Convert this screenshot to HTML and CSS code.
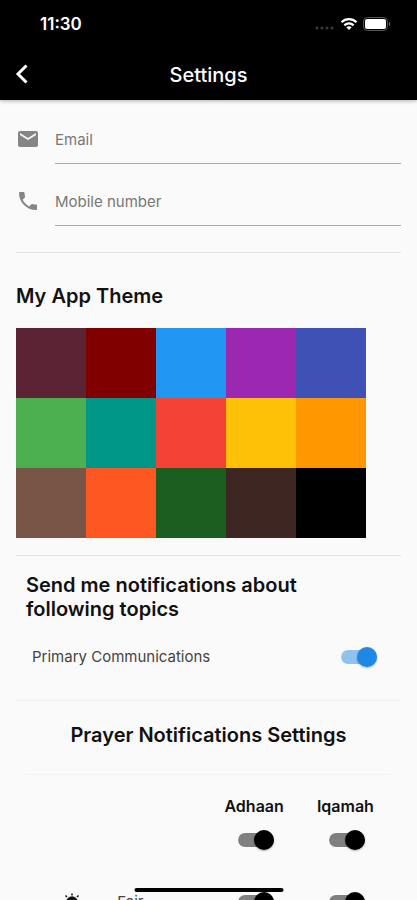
FILE: index.html
```html
<!DOCTYPE html>
<html lang="en">
<head>
    <meta charset="UTF-8">
    <meta name="viewport" content="width=device-width, initial-scale=1.0">
    <title>Settings</title>
    <link rel="stylesheet" href="styles.css">
</head>
<body>
    <header class="app-header">
        <div class="status-bar">
            <span class="time">11:30</span>
            <div class="status-icons">
                <svg width="20" height="14" viewBox="0 0 20 14" fill="#3a3a3a">
                    <circle cx="2" cy="11" r="1.5"/><circle cx="7" cy="11" r="1.5"/><circle cx="12" cy="11" r="1.5"/><circle cx="17" cy="11" r="1.5"/>
                </svg>
                <svg class="wifi" width="18" height="14" viewBox="0 0 18 14" fill="none" stroke="#fff" stroke-width="2.3">
                    <path d="M1.5 5.2C5.7 1.1 12.3 1.1 16.5 5.2"/>
                    <path d="M4.4 8.3C7 5.8 11 5.8 13.6 8.3"/>
                    <path d="M9 13 6.3 10.3C7.8 8.9 10.2 8.9 11.7 10.3Z" fill="#fff" stroke="none"/>
                </svg>
                <svg width="28" height="14" viewBox="0 0 28 14">
                    <rect x="0.5" y="0.5" width="24" height="13" rx="4" fill="none" stroke="#555"/>
                    <rect x="2" y="2" width="21" height="10" rx="2" fill="#fff"/>
                    <path d="M26 4.8C27.6 5.6 27.6 8.4 26 9.2Z" fill="#777"/>
                </svg>
            </div>
        </div>
        <div class="title-bar">
            <button class="back-btn" type="button" aria-label="Back">
                <svg width="14" height="22" viewBox="0 0 14 22" fill="none" stroke="#fff" stroke-width="3">
                    <path d="M11.5 1.5 3 10 11.5 18.5"/>
                </svg>
            </button>
            <h1>Settings</h1>
        </div>
    </header>

    <main class="content">
        <form class="contact">
            <div class="field">
                <label for="email" aria-label="Email">
                    <svg width="24" height="24" viewBox="0 0 24 24" fill="#858585"><path d="M20 4H4c-1.1 0-1.99.9-1.99 2L2 18c0 1.1.9 2 2 2h16c1.1 0 2-.9 2-2V6c0-1.1-.9-2-2-2zm0 4l-8 5-8-5V6l8 5 8-5v2z"/></svg>
                </label>
                <input type="email" id="email" placeholder="Email">
            </div>
            <div class="field">
                <label for="mobile" aria-label="Mobile number">
                    <svg width="24" height="24" viewBox="0 0 24 24" fill="#858585"><path d="M6.62 10.79c1.44 2.83 3.76 5.14 6.59 6.59l2.2-2.2c.27-.27.67-.36 1.02-.24 1.12.37 2.33.57 3.57.57.55 0 1 .45 1 1V20c0 .55-.45 1-1 1-9.39 0-17-7.61-17-17 0-.55.45-1 1-1h3.5c.55 0 1 .45 1 1 0 1.25.2 2.45.57 3.57.11.35.03.74-.25 1.02l-2.2 2.2z"/></svg>
                </label>
                <input type="tel" id="mobile" placeholder="Mobile number">
            </div>
        </form>

        <section class="theme">
            <h2>My App Theme</h2>
            <div class="swatches">
                <button type="button" class="plum" aria-label="Plum"></button>
                <button type="button" class="maroon" aria-label="Maroon"></button>
                <button type="button" class="blue" aria-label="Blue"></button>
                <button type="button" class="purple" aria-label="Purple"></button>
                <button type="button" class="indigo" aria-label="Indigo"></button>
                <button type="button" class="green" aria-label="Green"></button>
                <button type="button" class="teal" aria-label="Teal"></button>
                <button type="button" class="red" aria-label="Red"></button>
                <button type="button" class="amber" aria-label="Amber"></button>
                <button type="button" class="orange" aria-label="Orange"></button>
                <button type="button" class="brown" aria-label="Brown"></button>
                <button type="button" class="deep-orange" aria-label="Deep orange"></button>
                <button type="button" class="dark-green" aria-label="Dark green"></button>
                <button type="button" class="dark-brown" aria-label="Dark brown"></button>
                <button type="button" class="black" aria-label="Black"></button>
            </div>
        </section>

        <section class="topics">
            <h2>Send me notifications about following topics</h2>
            <div class="topic">
                <label for="primary">Primary Communications</label>
                <input type="checkbox" class="switch switch-blue" id="primary" checked>
            </div>
        </section>

        <section class="prayers">
            <h2>Prayer Notifications Settings</h2>
            <table>
                <thead>
                    <tr>
                        <td></td>
                        <td></td>
                        <th scope="col">Adhaan</th>
                        <th scope="col">Iqamah</th>
                    </tr>
                </thead>
                <tbody>
                    <tr class="all">
                        <td></td>
                        <td></td>
                        <td><input type="checkbox" class="switch" aria-label="All Adhaan" checked></td>
                        <td><input type="checkbox" class="switch" aria-label="All Iqamah" checked></td>
                    </tr>
                    <tr>
                        <td>
                            <svg width="20" height="20" viewBox="0 0 20 20" fill="none" stroke="#111" stroke-width="1.5">
                                <circle cx="10" cy="10" r="5" fill="#111"/>
                                <path d="M10 1.5v2M10 16.5v2M1 10h2M17 10h2M3.5 3.5l1.5 1.5M15 15l1.5 1.5M3.5 16.5 5 15M15 5l1.5-1.5"/>
                            </svg>
                        </td>
                        <td class="name">Fajr</td>
                        <td><input type="checkbox" class="switch" aria-label="Fajr Adhaan" checked></td>
                        <td><input type="checkbox" class="switch" aria-label="Fajr Iqamah" checked></td>
                    </tr>
                </tbody>
            </table>
        </section>
    </main>

    <div class="home-indicator"></div>
</body>
</html>
```

FILE: styles.css
```css
* {
    box-sizing: border-box;
}
body {
    margin: 0;
    height: 100vh;
    display: flex;
    flex-direction: column;
    overflow: hidden;
    font-family: Inter, "Liberation Sans", sans-serif;
    font-size: 15px;
    line-height: 20px;
    color: #111;
    background-color: #fafafa;
}
h1, h2 {
    margin: 0;
    font-weight: 600;
}
h2 {
    font-size: 20px;
    line-height: 24px;
}
button {
    padding: 0;
    border: none;
    cursor: pointer;
}

/* header */
.app-header {
    flex: none;
    background-color: #000;
    color: #fff;
    box-shadow: 0 1px 4px rgba(0, 0, 0, 0.3);
    z-index: 1;
}
.status-bar {
    display: flex;
    justify-content: space-between;
    align-items: center;
    height: 48px;
    padding: 0 26px 0 40px;
}
.time {
    font-size: 17px;
    font-weight: 600;
}
.status-icons {
    display: flex;
    align-items: center;
    gap: 5px;
}
.title-bar {
    display: grid;
    grid-template-columns: 32px 1fr 32px;
    align-items: center;
    height: 52px;
    padding: 2px 12px 0;
}
.title-bar h1 {
    font-size: 20px;
    line-height: 24px;
    font-weight: 500;
    text-align: center;
}
.back-btn {
    display: flex;
    padding: 0 3px;
    background: none;
}

/* content */
.content {
    flex: 1;
    min-height: 0;
    overflow-y: auto;
    scrollbar-width: none;
    padding: 14px 16px 0;
}
.contact {
    padding-bottom: 26px;
    border-bottom: 1px solid #e2e2e2;
}
.field {
    display: flex;
    align-items: center;
    gap: 15px;
    height: 50px;
}
.field + .field {
    margin-top: 12px;
}
.field label {
    display: flex;
}
.field input {
    flex: 1;
    min-width: 0;
    height: 50px;
    padding: 2px 0 0;
    border: none;
    border-bottom: 1px solid #aaa;
    border-radius: 0;
    background: none;
    font: inherit;
    outline: none;
}
.field input::placeholder {
    color: #777;
    opacity: 1;
}

.theme {
    padding: 31px 0 17px;
    border-bottom: 1px solid #e2e2e2;
}
.swatches {
    display: grid;
    grid-template-columns: repeat(5, 1fr);
    max-width: 350px;
    margin-top: 20px;
}
.swatches button {
    aspect-ratio: 1;
}
.plum { background-color: #5c2335; }
.maroon { background-color: #800000; }
.blue { background-color: #2196f3; }
.purple { background-color: #9c27b0; }
.indigo { background-color: #3f51b5; }
.green { background-color: #4caf50; }
.teal { background-color: #009688; }
.red { background-color: #f44336; }
.amber { background-color: #ffc107; }
.orange { background-color: #ff9800; }
.brown { background-color: #795548; }
.deep-orange { background-color: #ff5722; }
.dark-green { background-color: #1b5e20; }
.dark-brown { background-color: #3e2723; }
.black { background-color: #000; }

.topics {
    padding: 17px 10px 15px;
    border-bottom: 1px solid #eee;
}
.topics h2 {
    max-width: 340px;
}
.topic {
    display: flex;
    justify-content: space-between;
    align-items: center;
    height: 56px;
    margin-top: 8px;
    padding: 0 14px 0 6px;
    color: #444;
}

.prayers {
    padding: 0 10px;
}
.prayers h2 {
    padding: 22px 0 27px;
    border-bottom: 1px solid #f3f3f3;
    text-align: center;
}
table {
    width: 100%;
    table-layout: fixed;
    border-collapse: collapse;
    margin-top: 21px;
}
th, td {
    padding: 0;
    text-align: center;
    vertical-align: middle;
}
th {
    height: 20px;
    font-size: 16px;
    font-weight: 600;
}
tbody td {
    height: 62px;
}
.all td {
    height: 55px;
    padding: 14px 0 21px;
}
tbody td svg {
    display: block;
    margin: 0 auto;
}
td.name {
    text-align: left;
    color: #444;
}
td .switch {
    margin: 0 auto;
    left: 2px;
}

/* switch */
.switch {
    appearance: none;
    position: relative;
    display: flex;
    align-items: center;
    width: 36px;
    height: 20px;
    margin: 0;
    border: solid transparent;
    border-width: 3px 0;
    border-radius: 7px / 10px;
    background-color: #808080;
    background-clip: padding-box;
    cursor: pointer;
}
.switch::before {
    content: "";
    flex: none;
    width: 20px;
    height: 20px;
    border-radius: 50%;
    background-color: #000;
    box-shadow: 0 1px 2px rgba(0, 0, 0, 0.3);
}
.switch:checked::before {
    margin-left: auto;
}
.switch-blue {
    background-color: #8fc1f1;
}
.switch-blue::before {
    background-color: #1e88e5;
}

.home-indicator {
    position: fixed;
    bottom: 8px;
    left: 50%;
    width: 149px;
    height: 4px;
    border-radius: 2px;
    background-color: #000;
    transform: translateX(-50%);
    z-index: 2;
}
```
